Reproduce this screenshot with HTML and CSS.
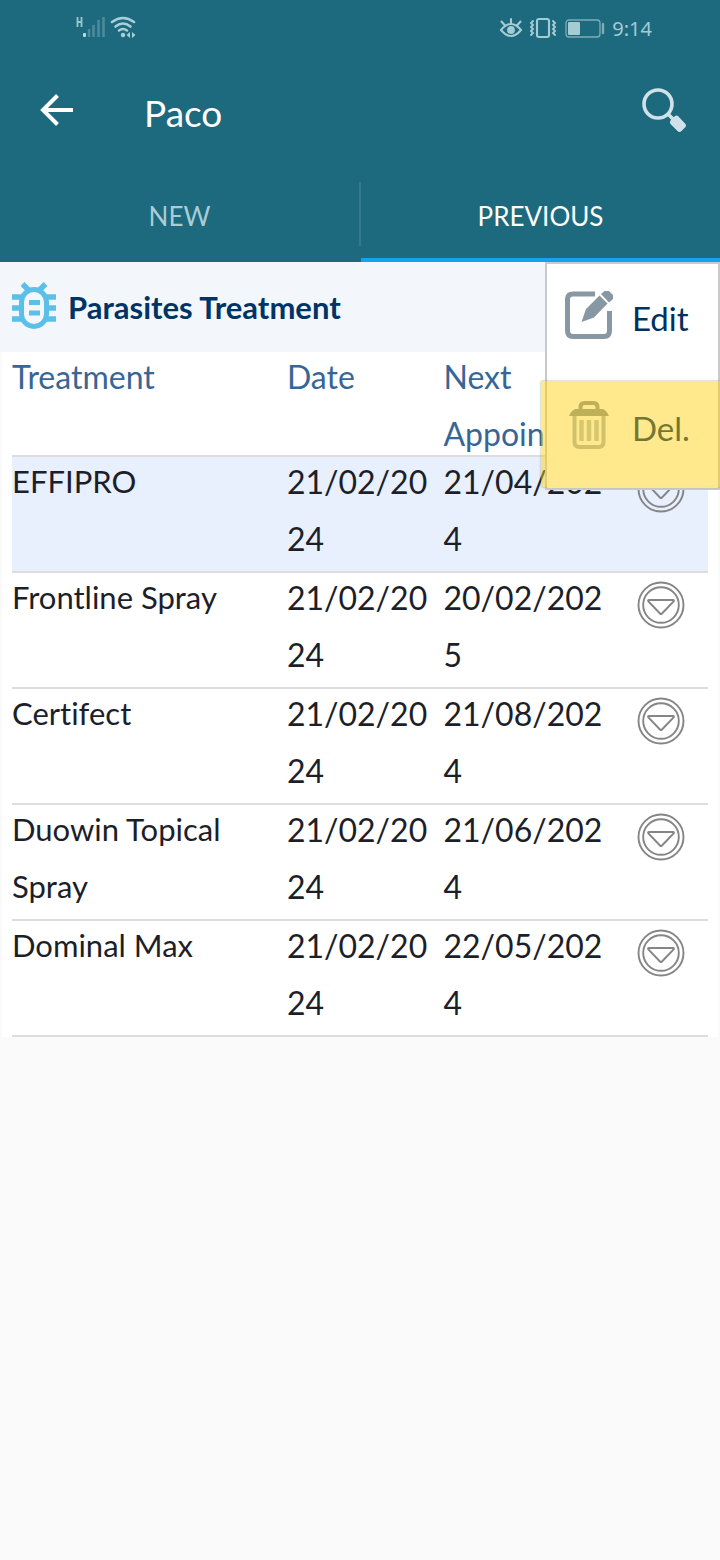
FILE: index.html
```html
<!DOCTYPE html>
<html lang="en">
<head>
  <meta charset="UTF-8">
  <meta name="viewport" content="width=device-width, initial-scale=1.0">
  <title>Paco - Parasites Treatment</title>
  <link rel="stylesheet" href="styles.css">
</head>
<body>
  <!-- shared icon for the row buttons -->
  <svg class="defs" width="0" height="0" aria-hidden="true">
    <symbol id="chevron" viewBox="0 0 48 48">
      <g fill="none" stroke="#858585" stroke-width="1.9">
        <circle cx="24" cy="24" r="22.5"/>
        <circle cx="24" cy="24" r="17.8"/>
        <path d="M12 19h24q1.500 0 .6 1.400L25 32.500q-1 1-2 0L11.400 20.400Q10.500 19 12 19z"/>
      </g>
    </symbol>
  </svg>

  <header class="app-header">
    <div class="status-bar">
      <div class="status-left">
        <svg width="62" height="28" viewBox="0 0 62 28">
          <path d="M2.500 3v10M6.500 3v10M2 8h4" stroke="#9dc3cd" stroke-width="1.800" fill="none"/>
          <rect x="8" y="19" width="3" height="4" rx="1" fill="#b9dae2"/>
          <path d="M14 15v8M18.500 11v12M23.500 6v17M28.500 3v20" stroke="#4b8b9b" stroke-width="2.600"/>
          <g fill="none" stroke="#a7cfd9" stroke-width="2.600" stroke-linecap="round">
            <path d="M37 8q11-8 22 0"/>
            <path d="M40.500 12.500q7.500-6 15 0"/>
            <path d="M44 16.500q4-3 8 0"/>
          </g>
          <circle cx="48" cy="21" r="2.200" fill="#a7cfd9"/>
          <path d="M55 18v6l-3.500-3zM57 18v6l3.500-3z" fill="#a7cfd9"/>
        </svg>
      </div>
      <div class="status-right">
        <svg width="108" height="24" viewBox="0 0 108 24">
          <g fill="none" stroke="#a5cbd4" stroke-width="2.100" stroke-linecap="round">
            <path d="M2 14q10-12 20 0q-10 12-20 0zM12 7V3M5.500 9L2.500 5.500M18.500 9l3-3.500"/>
            <rect x="38" y="3" width="12" height="18" rx="2"/>
            <path d="M34 5l-2 2 2 2-2 2 2 2-2 2 2 2-2 2M54 5l2 2-2 2 2 2-2 2 2 2-2 2 2 2" stroke-width="1.900"/>
          </g>
          <circle cx="12" cy="14" r="3.900" fill="#a5cbd4"/>
          <rect x="67" y="4" width="34" height="17" rx="3" fill="none" stroke="#7dadb9" stroke-width="1.300"/>
          <rect x="69" y="6" width="12" height="13" rx="1" fill="#a5cbd4"/>
          <path d="M104 8v9" stroke="#7dadb9" stroke-width="2.400" stroke-linecap="round"/>
        </svg>
        <span>9:14</span>
      </div>
    </div>

    <div class="toolbar">
      <button class="icon-button" type="button" aria-label="Back">
        <svg width="34" height="34" viewBox="0 0 34 34">
          <path d="M33 17H4M17.500 2.500L3 17l14.500 14.500" fill="none" stroke="#fff" stroke-width="4"/>
        </svg>
      </button>
      <h1>Paco</h1>
      <button class="icon-button" type="button" aria-label="Search">
        <svg width="46" height="46" viewBox="0 0 46 46">
          <circle cx="17" cy="17" r="14" fill="none" stroke="#d0e2e9" stroke-width="3.600"/>
          <path d="M27 27l5 5" stroke="#d0e2e9" stroke-width="3.600"/>
          <path d="M29.500 33.500l4-4q2-2 4 0l6.500 7q2 2 0 4l-3.500 3.500q-2 2-4 0l-7-7q-1.500-2 0-3.500z" fill="#d0e2e9"/>
        </svg>
      </button>
    </div>

    <nav class="tabs">
      <button class="tab" type="button">NEW</button>
      <button class="tab active" type="button">PREVIOUS</button>
    </nav>
  </header>

  <main>
    <div class="section-title">
      <svg width="44" height="50" viewBox="0 0 44 50">
        <path d="M0 15h44M0 26h44M0 37h44M10.500 2l7 7M33.500 2l-7 7" stroke="#5bc0e8" stroke-width="5.400"/>
        <rect x="9.500" y="7.500" width="25" height="37" rx="12.500" fill="#f3f7fb" stroke="#5bc0e8" stroke-width="5"/>
        <path d="M17 20.500h11M17 31h11" stroke="#5bc0e8" stroke-width="5"/>
      </svg>
      <h2>Parasites Treatment</h2>
    </div>

    <div class="panel">
      <table>
        <colgroup>
          <col class="col-treatment">
          <col class="col-date">
          <col class="col-next">
          <col>
        </colgroup>
        <thead>
          <tr>
            <th><div class="text">Treatment</div></th>
            <th><div class="text">Date</div></th>
            <th><div class="text">Next Appointment</div></th>
            <th></th>
          </tr>
        </thead>
        <tbody>
          <tr class="selected">
            <td><div class="text">EFFIPRO</div></td>
            <td class="date"><div class="text">21/02/2024</div></td>
            <td class="date"><div class="text">21/04/2024</div></td>
            <td><button class="more" type="button" aria-label="Options for EFFIPRO"><svg width="48" height="48"><use href="#chevron"/></svg></button></td>
          </tr>
          <tr>
            <td><div class="text">Frontline Spray</div></td>
            <td class="date"><div class="text">21/02/2024</div></td>
            <td class="date"><div class="text">20/02/2025</div></td>
            <td><button class="more" type="button" aria-label="Options for Frontline Spray"><svg width="48" height="48"><use href="#chevron"/></svg></button></td>
          </tr>
          <tr>
            <td><div class="text">Certifect</div></td>
            <td class="date"><div class="text">21/02/2024</div></td>
            <td class="date"><div class="text">21/08/2024</div></td>
            <td><button class="more" type="button" aria-label="Options for Certifect"><svg width="48" height="48"><use href="#chevron"/></svg></button></td>
          </tr>
          <tr>
            <td><div class="text">Duowin Topical Spray</div></td>
            <td class="date"><div class="text">21/02/2024</div></td>
            <td class="date"><div class="text">21/06/2024</div></td>
            <td><button class="more" type="button" aria-label="Options for Duowin Topical Spray"><svg width="48" height="48"><use href="#chevron"/></svg></button></td>
          </tr>
          <tr>
            <td><div class="text">Dominal Max</div></td>
            <td class="date"><div class="text">21/02/2024</div></td>
            <td class="date"><div class="text">22/05/2024</div></td>
            <td><button class="more" type="button" aria-label="Options for Dominal Max"><svg width="48" height="48"><use href="#chevron"/></svg></button></td>
          </tr>
        </tbody>
      </table>
    </div>

    <!-- row menu -->
    <div class="menu">
      <button class="menu-item" type="button">
        <svg width="48" height="48" viewBox="0 0 48 48">
          <path d="M30 3H8Q2.500 3 2.500 8.500v31Q2.500 45.500 8 45.500h31q5.500 0 5.500-6V20" fill="none" stroke="#8797a3" stroke-width="5"/>
          <path d="M16.500 31l4.500-13L34.500 4.500l8 8L29 26.500zM36 3L39.500 0H44l4 4v4l-4 3.500z" fill="#8797a3"/>
        </svg>
        <span>Edit</span>
      </button>
      <button class="menu-item delete" type="button">
        <svg width="48" height="48" viewBox="0 0 48 48">
          <g fill="none" stroke="#8797a3">
            <path d="M15.500 9V6q0-4 4-4h9q4 0 4 4v3" stroke-width="4"/>
            <path d="M9.500 15v26q0 5 5 5h19q5 0 5-5V15" stroke-width="4" opacity=".7"/>
            <path d="M16.500 19v21M24 19v21M31.500 19v21" stroke-width="4.500" opacity=".6"/>
          </g>
          <path d="M10 8h28q4 2 6 7H4q2-5 6-7z" fill="#8797a3"/>
        </svg>
        <span>Del.</span>
      </button>
    </div>
  </main>
</body>
</html>
```
FILE: styles.css
```css
* {
  box-sizing: border-box;
}
body {
  margin: 0;
  background: #fafafa;
  color: #1c1f2a;
  font-family: Lato, "Noto Sans", sans-serif;
  font-size: 31px;
  font-variant-ligatures: none;
}
button {
  padding: 0;
  border: none;
  background: none;
  color: inherit;
  font: inherit;
  cursor: pointer;
}
svg {
  display: block;
  flex: none;
}
.defs {
  position: absolute;
}
.app-header {
  background: #1d697d;
  color: #fff;
}
.status-bar {
  display: flex;
  justify-content: space-between;
  align-items: center;
  height: 56px;
  padding: 0 68px 0 75px;
}
.status-right {
  display: flex;
  align-items: center;
  gap: 5px;
  color: #a5cbd4;
  font-family: "Noto Sans", sans-serif;
  font-size: 20px;
}
.toolbar {
  display: flex;
  align-items: center;
  height: 108px;
  padding: 0 33px 0 40px;
}
.toolbar h1 {
  flex: 1;
  margin: 0;
  padding: 4px 0 0 70px;
  font-size: 37px;
  font-weight: normal;
}
.tabs {
  display: flex;
  height: 98px;
}
.tab {
  flex: 1;
  padding-top: 10px;
  border-bottom: 4px solid transparent;
  color: #a9ccd6;
  font-size: 26px;
}
.tab.active {
  order: 2;
  border-bottom-color: #10a5ed;
  color: #fff;
}
/* divider between the two tabs */
.tabs::before {
  content: "";
  order: 1;
  width: 2px;
  margin: 18px 0 16px;
  background: #347a8c;
}
main {
  position: relative;
}
.section-title {
  display: flex;
  align-items: center;
  gap: 12px;
  height: 90px;
  padding: 0 12px;
  background: #f3f7fb;
}
.section-title h2 {
  margin: 0;
  color: #003366;
  font-size: 31px;
}
.panel {
  margin: 0 2px;
  padding: 0 10px;
  background: #fff;
}
table {
  width: 100%;
  table-layout: fixed;
  border-collapse: separate;
  border-spacing: 0;
  line-height: 57px;
}
.col-treatment {
  width: 39.5%;
}
.col-date {
  width: 22.5%;
}
.col-next {
  width: 25%;
}
th,
td {
  padding: 0 8px 0 0;
  border-bottom: 2px solid #dcdddf;
  text-align: left;
  vertical-align: top;
}
td {
  height: 116px;
}
th {
  height: 105px;
  color: #376696;
  font-size: 32px;
  font-weight: normal;
}
.text {
  margin-top: -4px;
}
th .text {
  height: 107px;
}
.date {
  font-size: 32px;
  word-break: break-all;
}
.selected {
  background: #e8effd;
}
.more {
  display: block;
  margin: 8px auto 0 19px;
}
.menu {
  position: absolute;
  top: 0;
  right: 0;
  width: 175px;
  border: 2px solid #c9cacc;
  background: #fff;
  color: #003060;
}
.menu-item {
  display: flex;
  align-items: center;
  gap: 19px;
  width: 100%;
  height: 118px;
  padding: 0 0 16px 18px;
  font-size: 33px;
}
.menu-item span {
  padding-top: 6px;
}
/* highlight reaches past the menu edge */
.delete {
  position: relative;
  height: 106px;
  padding-bottom: 20px;
}
.delete::after {
  content: "";
  position: absolute;
  inset: -1px -2px 1px -6px;
  background: rgba(255, 206, 0, 0.45);
  box-shadow: 0 0 2px rgba(90, 90, 60, 0.5);
}
```
